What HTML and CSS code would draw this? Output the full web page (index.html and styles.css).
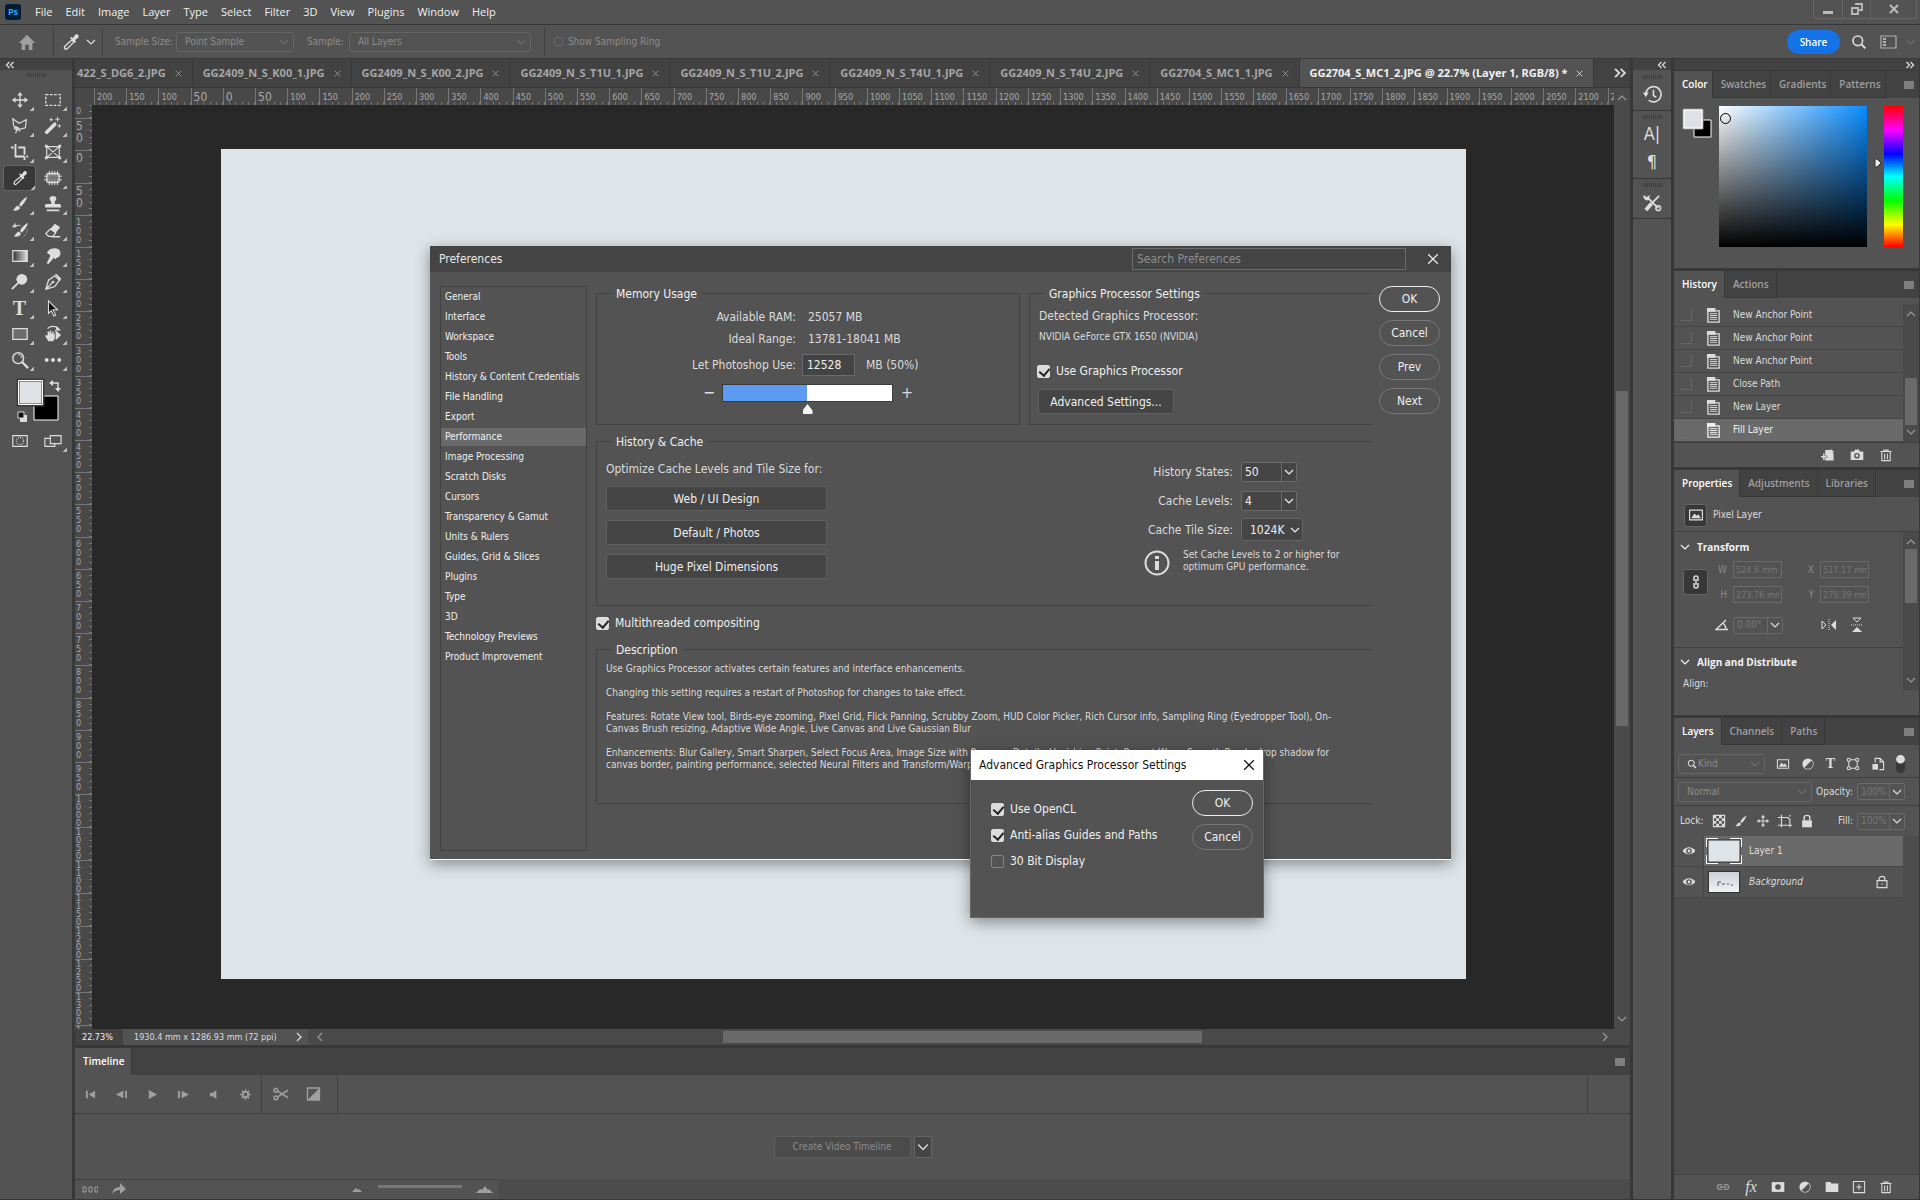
FILE: index.html
```html
<!DOCTYPE html>
<html lang="en">
<head>
    <meta charset="UTF-8">
    <meta name="viewport" content="width=device-width, initial-scale=1.0">
    <title>Photoshop</title>
    <link rel="stylesheet" href="styles.css">
</head>
<body>
    <!-- shared icons -->
    <svg class="sprite" aria-hidden="true">
        <symbol id="chev" viewBox="0 0 10 10"><path d="M1 3l4 4 4-4" fill="none" stroke="currentColor" stroke-width="1.2"/></symbol>
        <symbol id="chev-up" viewBox="0 0 10 10"><path d="M1 7l4-4 4 4" fill="none" stroke="currentColor" stroke-width="1.2"/></symbol>
        <symbol id="chev-left" viewBox="0 0 10 10"><path d="M7 1L3 5l4 4" fill="none" stroke="currentColor" stroke-width="1.2"/></symbol>
        <symbol id="chev-right" viewBox="0 0 10 10"><path d="M3 1l4 4-4 4" fill="none" stroke="currentColor" stroke-width="1.2"/></symbol>
        <symbol id="dbl-left" viewBox="0 0 10 10"><path d="M4.500 2L1.500 5l3 3M8.500 2L5.500 5l3 3" fill="none" stroke="currentColor" stroke-width="1.3"/></symbol>
        <symbol id="dbl-right" viewBox="0 0 10 10"><path d="M1.500 2l3 3-3 3M5.500 2l3 3-3 3" fill="none" stroke="currentColor" stroke-width="1.3"/></symbol>
        <symbol id="close" viewBox="0 0 10 10"><path d="M1 1l8 8M9 1L1 9" fill="none" stroke="currentColor" stroke-width="1.1"/></symbol>
        <symbol id="menu" viewBox="0 0 10 10"><path d="M0 2h10M0 4h10M0 6h10M0 8h10" stroke="currentColor"/></symbol>
        <symbol id="eyedropper" viewBox="0 0 20 20"><path d="M4 17c-1-1-1-2 1-4l6-5 2 2-6 6c-1 1-2 2-3 1z" fill="none" stroke="currentColor" stroke-width="1.3"/><path d="M9 6l1-1 2 1 2-3c2-2 5 1 3 3l-3 2 1 2-1 1z" fill="currentColor"/></symbol>
        <symbol id="move" viewBox="0 0 20 20"><path d="M10 3v14M3 10h14" stroke="currentColor" stroke-width="1.4"/><path d="M10 1l3 4H7zM10 19l3-4H7zM1 10l4-3v6zM19 10l-4-3v6z" fill="currentColor"/></symbol>
        <symbol id="brush" viewBox="0 0 20 20"><path d="M18 2c-4 2-7 5-9 9l2 2c3-3 6-7 7-11z" fill="currentColor"/><path d="M8 12c-3 0-3 3-6 5 4 1 8 0 8-3z" fill="currentColor"/></symbol>
        <symbol id="trash" viewBox="0 0 20 20"><path d="M2 5h16M7 5V3h6v2M4 5v13h12V5M8 8v8M12 8v8" fill="none" stroke="currentColor" stroke-width="1.500"/></symbol>
        <symbol id="half" viewBox="0 0 20 20"><circle cx="10" cy="10" r="8" fill="currentColor"/><path d="M5 15L15 5a7 7 0 0 1-10 10z" fill="#535353"/></symbol>
        <symbol id="search" viewBox="0 0 20 20"><circle cx="8.500" cy="8.500" r="6" fill="none" stroke="currentColor" stroke-width="2"/><path d="M13 13l5 5" stroke="currentColor" stroke-width="2.500"/></symbol>
        <symbol id="image" viewBox="0 0 20 20"><path d="M2 4h16v12H2z" fill="none" stroke="currentColor" stroke-width="1.500"/><path d="M4 14l4-6 3 3 2-2 3 5z" fill="currentColor"/></symbol>
        <symbol id="state" viewBox="0 0 16 16"><path d="M1 0h9v4H1z" fill="currentColor"/><path d="M2 3h12v12H2z" fill="none" stroke="currentColor" stroke-width="1.400"/><path d="M4 6h8M4 8h8M4 10h8M4 12h8" stroke="currentColor"/></symbol>
        <symbol id="eye" viewBox="0 0 20 20"><path d="M1 10c4-7 14-7 18 0-4 6-14 6-18 0z" fill="currentColor"/><circle cx="10" cy="10" r="4" fill="#535353"/><circle cx="10" cy="10" r="2" fill="currentColor"/></symbol>
        <symbol id="gizmo" viewBox="0 0 20 20"><path d="M4 4h12v12H4z" fill="none" stroke="currentColor" stroke-width="1.500"/><path d="M2 2h4v4H2zM14 2h4v4h-4zM2 14h4v4H2zM14 14h4v4h-4z" fill="#535353" stroke="currentColor" stroke-width="1.400"/></symbol>
    </svg>

    <header class="menubar">
        <span class="logo">Ps</span>
        <nav class="menus">
            <a href="#">File</a><a href="#">Edit</a><a href="#">Image</a><a href="#">Layer</a><a href="#">Type</a><a href="#">Select</a><a href="#">Filter</a><a href="#">3D</a><a href="#">View</a><a href="#">Plugins</a><a href="#">Window</a><a href="#">Help</a>
        </nav>
        <div class="window-controls">
            <button aria-label="Minimize"><svg viewBox="0 0 12 12"><path d="M1 8h10v3H1z" fill="currentColor"/></svg></button>
            <button aria-label="Restore"><svg viewBox="0 0 12 12"><path d="M4 1h7v6H8M1 5h6v6H1z" fill="none" stroke="currentColor" stroke-width="1.800"/></svg></button>
            <button class="wide" aria-label="Close"><svg viewBox="0 0 12 12"><path d="M2 2l8 8M10 2l-8 8" stroke="currentColor" stroke-width="2"/></svg></button>
        </div>
    </header>

    <div class="options">
        <button class="home" aria-label="Home"><svg viewBox="0 0 20 20"><path d="M10 2L1 11h3v8h4v-6h4v6h4v-8h3z" fill="currentColor"/></svg></button>
        <button class="current-tool" aria-label="Eyedropper tool"><svg class="i20"><use href="#eyedropper"/></svg><svg class="i10"><use href="#chev"/></svg></button>
        <div class="option-fields">
            <label for="sampleSize">Sample Size:</label>
            <span class="select size"><select id="sampleSize" disabled><option>Point Sample</option></select><svg><use href="#chev"/></svg></span>
            <label for="sample">Sample:</label>
            <span class="select sample"><select id="sample" disabled><option>All Layers</option></select><svg><use href="#chev"/></svg></span>
            <label class="ring"><input type="checkbox" disabled>Show Sampling Ring</label>
        </div>
        <button class="share">Share</button>
        <button class="i16 bright" aria-label="Search"><svg class="i16"><use href="#search"/></svg></button>
        <button class="workspace" aria-label="Workspace"><svg viewBox="0 0 18 16"><path d="M1 2h15v12H1z" fill="none" stroke="currentColor" stroke-width="1.200"/><path d="M3 4h3v2H3zM3 7h3v2H3zM3 10h3v2H3z" fill="currentColor"/></svg><svg class="i10 faint"><use href="#chev"/></svg></button>
    </div>

    <main class="workarea">
        <aside class="toolbox">
            <div class="collapse"><svg class="i10"><use href="#dbl-left"/></svg></div>
            <div class="grip"></div>
            <div class="tools">
                <button aria-label="Move"><svg><use href="#move"/></svg></button>
                <button aria-label="Marquee"><svg viewBox="0 0 20 20"><path d="M2 4h16v12H2z" fill="none" stroke="currentColor" stroke-width="1.500" stroke-dasharray="3 1.600"/></svg></button>
                <button aria-label="Lasso"><svg viewBox="0 0 20 20"><path d="M2 2l7 5 8-4-1 9-8 2-5-4zM8 12c-5-3-6 2-1 2l-2 4M8 12l2 4" fill="none" stroke="currentColor" stroke-width="1.300"/></svg></button>
                <button aria-label="Magic wand"><svg viewBox="0 0 20 20"><path d="M3 17L12 8" stroke="currentColor" stroke-width="4" stroke-linecap="round"/><path d="M8 1v4M6 3h4M15 0v5M12.500 2.500h5M17 8v4M15 10h4" stroke="currentColor"/></svg></button>
                <button aria-label="Crop"><svg viewBox="0 0 20 20"><path d="M5 1v14h10M0 5h3M8 5h7v8M15 15v4M17 15h2" fill="none" stroke="currentColor" stroke-width="2"/></svg></button>
                <button aria-label="Frame"><svg viewBox="0 0 20 20"><path d="M3 4h14v12H3zM3 4l14 12M17 4L3 16" fill="none" stroke="currentColor" stroke-width="1.300"/><path d="M1 2h3v3H1zM16 2h3v3h-3zM1 15h3v3H1zM16 15h3v3h-3z" fill="currentColor"/></svg></button>
                <button class="active" aria-label="Eyedropper"><svg><use href="#eyedropper"/></svg></button>
                <button aria-label="Patch"><svg viewBox="0 0 20 20"><rect x="3" y="5" width="14" height="10" rx="2" fill="#777" stroke="currentColor" stroke-width="1.400"/><path d="M6 2v5M9 2v5M12 2v5M15 2v5M6 13v5M9 13v5M12 13v5M15 13v5M0 8h5M0 12h5M15 8h5M15 12h5" stroke="currentColor"/></svg></button>
                <button aria-label="Brush"><svg><use href="#brush"/></svg></button>
                <button aria-label="Clone stamp"><svg viewBox="0 0 20 20"><path d="M10 1c4 0 5 4 2 6v3h5c2 0 2 2 2 4H1c0-2 0-4 2-4h5V7C5 5 6 1 10 1zM3 16h14v2H3z" fill="currentColor"/></svg></button>
                <button aria-label="History brush"><svg viewBox="0 0 20 20"><path d="M19 2c-4 2-7 5-9 9l2 2c3-3 6-7 7-11zM9 12c-3 0-3 3-6 5 4 1 8 0 8-3zM1 7l4-5v3c3-1 5-1 7 0-3 0-5 0-7 2z" fill="currentColor"/><path d="M18 9c0 4-2 7-5 9" fill="none" stroke="currentColor" stroke-dasharray="1 1.500"/></svg></button>
                <button aria-label="Eraser"><svg viewBox="0 0 20 20"><path d="M12 3l6 4-5 6-6-4z" fill="currentColor"/><path d="M7 9l6 4-3 4H5l-3-3zM8 17.500h10" fill="none" stroke="currentColor" stroke-width="1.400"/></svg></button>
                <button aria-label="Gradient"><svg viewBox="0 0 20 20"><defs><linearGradient id="gr"><stop offset="0" stop-color="#333"/><stop offset="1" stop-color="#ddd"/></linearGradient></defs><path d="M2 4h16v12H2z" fill="url(#gr)" stroke="currentColor" stroke-width="1.400"/></svg></button>
                <button aria-label="Smudge"><svg viewBox="0 0 20 20"><path d="M4 5c3-5 13-5 14 0 1 4-1 7-4 7l-1 2-2-2-6 7-2-1 4-8-1-2c-2 0-3-1-2-3z" fill="currentColor"/></svg></button>
                <button aria-label="Dodge"><svg viewBox="0 0 20 20"><circle cx="12" cy="7" r="6" fill="currentColor"/><path d="M8 11l-7 7" stroke="currentColor" stroke-width="2"/></svg></button>
                <button aria-label="Pen"><svg viewBox="0 0 20 20"><path d="M2 18l3-10 7-5 5 5-5 7zM2 18l7-7" fill="none" stroke="currentColor" stroke-width="1.400"/><circle cx="10" cy="10" r="1.500" fill="currentColor"/><path d="M12 1l2 0 5 5-1 3z" fill="currentColor"/></svg></button>
                <button class="glyph" aria-label="Type">T</button>
                <button aria-label="Path selection"><svg viewBox="0 0 20 20"><path d="M5 2l10 10H10l3 6-2 1-3-6-3 3z" fill="#111" stroke="currentColor" stroke-width="1.200"/></svg></button>
                <button aria-label="Rectangle"><svg viewBox="0 0 20 20"><path d="M2 4h16v12H2z" fill="#6d6d6d" stroke="currentColor" stroke-width="1.400"/></svg></button>
                <button aria-label="Rotate view"><svg viewBox="0 0 20 20"><path d="M5 18L1 12l2-1 1 1V7h2v3l1-4h1v4l2-3 1 1-1 3 2-2v6l-2 3z" fill="currentColor"/><path d="M12 5l7 6-6 6v-8z" fill="currentColor"/><path d="M4 4c3-3 7-3 11-1" fill="none" stroke="currentColor" stroke-width="1.400"/><path d="M14 1l5 5h-6z" fill="currentColor"/></svg></button>
                <button aria-label="Zoom"><svg viewBox="0 0 20 20"><circle cx="8" cy="8" r="6" fill="none" stroke="currentColor" stroke-width="1.600"/><path d="M12 12l7 7" stroke="currentColor" stroke-width="2.500"/><path d="M8 4c2 0 4 2 4 4" fill="none" stroke="currentColor"/></svg></button>
                <button aria-label="More tools"><svg viewBox="0 0 20 20"><circle cx="3" cy="10" r="2.200" fill="currentColor"/><circle cx="10" cy="10" r="2.200" fill="currentColor"/><circle cx="17" cy="10" r="2.200" fill="currentColor"/></svg></button>
            </div>
            <svg class="swatches" viewBox="0 0 66 46"><path d="M30 18h24v24H30z" fill="#000" stroke="#fff"/><path d="M14 2h25v25H14z" fill="#dfe3e6" stroke="#3a3a3a" stroke-width="3"/><path d="M14.500 2.500h24v24h-24z" fill="none" stroke="#fff"/><path d="M16 37h7v7h-7z" fill="#ddd"/><path d="M14 34h6v6h-6z" fill="#111" stroke="#ddd"/><path d="M48 5h6v7" fill="none" stroke="#ddd" stroke-width="1.500"/><path d="M45 5l4-3v6zM54 14l-3-4h6z" fill="#ddd"/></svg>
            <div class="tools">
                <button class="plain" aria-label="Quick mask"><svg viewBox="0 0 20 20"><path d="M2 4h16v12H2z" fill="none" stroke="currentColor" stroke-width="1.300"/><circle cx="10" cy="10" r="4" fill="none" stroke="currentColor" stroke-width="1.300" stroke-dasharray="1 1.300"/></svg></button>
                <button aria-label="Screen mode"><svg viewBox="0 0 20 20"><path d="M1 7h11v9H1z" fill="none" stroke="currentColor" stroke-width="1.300"/><path d="M7 4h12v9H7z" fill="#535353" stroke="currentColor" stroke-width="1.300"/></svg></button>
            </div>
        </aside>

        <section class="center">
            <div class="doc-tabs">
                <div class="doc-tab first">422_S_DG6_2.JPG<svg><use href="#close"/></svg></div>
                <div class="doc-tab">GG2409_N_S_K00_1.JPG<svg><use href="#close"/></svg></div>
                <div class="doc-tab">GG2409_N_S_K00_2.JPG<svg><use href="#close"/></svg></div>
                <div class="doc-tab">GG2409_N_S_T1U_1.JPG<svg><use href="#close"/></svg></div>
                <div class="doc-tab">GG2409_N_S_T1U_2.JPG<svg><use href="#close"/></svg></div>
                <div class="doc-tab">GG2409_N_S_T4U_1.JPG<svg><use href="#close"/></svg></div>
                <div class="doc-tab">GG2409_N_S_T4U_2.JPG<svg><use href="#close"/></svg></div>
                <div class="doc-tab">GG2704_S_MC1_1.JPG<svg><use href="#close"/></svg></div>
                <div class="doc-tab active">GG2704_S_MC1_2.JPG @ 22.7% (Layer 1, RGB/8) *<svg><use href="#close"/></svg></div>
                <span class="more"><svg class="i14"><use href="#dbl-right"/></svg></span>
            </div>
            <div class="editor">
                <div class="corner"></div>
                <div class="ruler-x" id="rulerX"></div>
                <div class="ruler-y" id="rulerY"></div>
                <div class="canvas"><div class="paper"></div></div>
                <div class="vscroll"><svg class="i10"><use href="#chev-up"/></svg><div class="thumb"></div><svg class="i10"><use href="#chev"/></svg></div>
            </div>
            <div class="status">
                <input class="zoom" aria-label="Zoom level" value="22.73%">
                <span class="doc-size">1930.4 mm x 1286.93 mm (72 ppi)</span>
                <svg class="i10 expand"><use href="#chev-right"/></svg>
                <div class="hscroll"><svg class="i10"><use href="#chev-left"/></svg><div class="thumb"></div><svg class="i10"><use href="#chev-right"/></svg></div>
            </div>
            <section class="timeline">
                <div class="panel-tabs"><button class="active">Timeline</button><svg class="i10 burger"><use href="#menu"/></svg></div>
                <div class="transport">
                    <button aria-label="First frame"><svg viewBox="0 0 12 12"><path d="M1 2h2v8H1zM11 2v8L4 6z" fill="currentColor"/></svg></button>
                    <button aria-label="Previous frame"><svg viewBox="0 0 12 12"><path d="M10 2h2v8h-2zM8 2v8L0 6z" fill="currentColor"/></svg></button>
                    <button aria-label="Play"><svg viewBox="0 0 12 12"><path d="M2 1l9 5-9 5z" fill="currentColor"/></svg></button>
                    <button aria-label="Next frame"><svg viewBox="0 0 12 12"><path d="M0 2h2v8H0zM4 2v8l8-4z" fill="currentColor"/></svg></button>
                    <button aria-label="Mute"><svg viewBox="0 0 12 12"><path d="M1 4h3l4-3v10L4 8H1z" fill="currentColor"/></svg></button>
                    <button aria-label="Settings"><svg viewBox="0 0 12 12"><circle cx="6" cy="6" r="3" fill="none" stroke="currentColor" stroke-width="2"/><path d="M6 0v2M6 10v2M0 6h2M10 6h2M2 2l1.400 1.400M8.600 8.600L10 10M10 2L8.600 3.400M3.400 8.600L2 10" stroke="currentColor" stroke-width="1.600"/></svg></button>
                    <div class="edit-tools">
                        <button aria-label="Split"><svg viewBox="0 0 16 14"><circle cx="3" cy="3" r="2" fill="none" stroke="currentColor" stroke-width="1.600"/><circle cx="3" cy="11" r="2" fill="none" stroke="currentColor" stroke-width="1.600"/><path d="M5 4l11 7M5 10l11-7" stroke="currentColor" stroke-width="1.600"/></svg></button>
                        <button aria-label="Transition"><svg viewBox="0 0 14 14"><path d="M1 1h12v12H1z" fill="none" stroke="currentColor" stroke-width="1.300"/><path d="M13 1v12H1z" fill="currentColor"/></svg></button>
                    </div>
                    <div class="ruler-end"></div>
                </div>
                <div class="track">
                    <button class="create" disabled>Create Video Timeline</button>
                    <button class="create-more" aria-label="Timeline type"><svg class="i12"><use href="#chev"/></svg></button>
                </div>
                <div class="timeline-foot">
                    <div class="foot-left">
                        <svg class="i16" viewBox="0 0 16 16"><path d="M1 6h3v5H1zM7 6h3v5H7zM13 6h3v5h-3z" fill="none" stroke="currentColor"/></svg>
                        <svg class="i16" viewBox="0 0 16 16"><path d="M1 13c1-5 4-7 8-7V2l6 6-6 5V9c-3 0-6 1-8 4z" fill="currentColor"/></svg>
                        <svg class="i16 push" viewBox="0 0 16 16"><path d="M3 11l4-4 2 2 1-1 3 3z" fill="currentColor"/></svg>
                        <input type="range" aria-label="Timeline zoom">
                        <svg class="i18" viewBox="0 0 18 16"><path d="M1 12l4-4 2 1 3-4 3 4 1-1 4 4z" fill="currentColor"/></svg>
                    </div>
                </div>
            </section>
        </section>

        <aside class="dock">
            <div class="collapse end"><svg class="i10"><use href="#dbl-left"/></svg></div>
            <div class="dock-group">
                <div class="grip"></div>
                <button aria-label="History"><svg viewBox="0 0 20 20"><path d="M3 10a8 8 0 1 1 3 6M11 5v6l3 2" fill="none" stroke="currentColor" stroke-width="1.700"/><path d="M0 8h6l-3 5z" fill="currentColor"/></svg></button>
            </div>
            <div class="dock-group">
                <div class="grip"></div>
                <button class="letter" aria-label="Character">A|</button>
                <button class="letter" aria-label="Paragraph">¶</button>
            </div>
            <div class="dock-group">
                <div class="grip"></div>
                <button aria-label="Tool presets"><svg viewBox="0 0 20 20"><path d="M4 4l12 12M17 3L9 11" stroke="currentColor" stroke-width="1.800"/><path d="M9 11l-6 7" stroke="currentColor" stroke-width="4"/><path d="M1 3l3 3 3-3M1 3c0 4 3 5 6 3" fill="none" stroke="currentColor" stroke-width="1.600"/><circle cx="16" cy="16" r="2.500" fill="none" stroke="currentColor" stroke-width="1.500"/></svg></button>
            </div>
        </aside>

        <aside class="panels">
            <div class="collapse end"><svg class="i10"><use href="#dbl-right"/></svg></div>
            <section class="panel color-panel">
                <div class="panel-tabs"><button class="active">Color</button><button>Swatches</button><button>Gradients</button><button>Patterns</button><svg class="i10 burger"><use href="#menu"/></svg></div>
                <div class="color-body">
                    <svg class="mini-swatches" viewBox="0 0 32 32"><path d="M12 12h17v17H12z" fill="#000" stroke="#fff"/><path d="M1 1h20v20H1z" fill="#dfe1e4" stroke="#888"/><path d="M2 2h18v18H2z" fill="#dfe1e4" stroke="#fff"/></svg>
                    <div class="field"><span class="picker"></span></div>
                    <svg class="hue-mark" viewBox="0 0 8 10"><path d="M1 1h2l4 4-4 4H1z" fill="#eee" stroke="#333" stroke-width="1"/></svg>
                    <div class="hue"></div>
                </div>
            </section>
            <section class="panel history-panel">
                <div class="panel-tabs"><button class="active">History</button><button>Actions</button><svg class="i10 burger"><use href="#menu"/></svg></div>
                <div class="history-body">
                    <ul class="states">
                        <li><i class="slot"></i><svg><use href="#state"/></svg>New Anchor Point</li>
                        <li><i class="slot"></i><svg><use href="#state"/></svg>New Anchor Point</li>
                        <li><i class="slot"></i><svg><use href="#state"/></svg>New Anchor Point</li>
                        <li><i class="slot"></i><svg><use href="#state"/></svg>Close Path</li>
                        <li><i class="slot"></i><svg><use href="#state"/></svg>New Layer</li>
                        <li class="active"><i class="slot"></i><svg><use href="#state"/></svg>Fill Layer</li>
                    </ul>
                    <div class="side-scroll history-scroll"><svg class="i10"><use href="#chev-up"/></svg><div class="thumb"></div><svg class="i10"><use href="#chev"/></svg></div>
                </div>
                <div class="panel-foot">
                    <button aria-label="New document from state"><svg viewBox="0 0 20 20"><path d="M6 3h7l5 5v10H6v-4h3v-3H6zM14 1l5 5h-5z" fill="currentColor"/><path d="M4 8v9M0 12.500h8" stroke="currentColor" stroke-width="2"/></svg></button>
                    <button aria-label="Snapshot"><svg viewBox="0 0 20 20"><path d="M1 5h5l1-3h6l1 3h5v12H1z" fill="currentColor"/><circle cx="10" cy="11" r="3" fill="none" stroke="#535353" stroke-width="2"/></svg></button>
                    <button aria-label="Delete state"><svg><use href="#trash"/></svg></button>
                </div>
            </section>
            <section class="panel properties-panel">
                <div class="panel-tabs"><button class="active">Properties</button><button>Adjustments</button><button>Libraries</button><svg class="i10 burger"><use href="#menu"/></svg></div>
                <div class="layer-kind"><span class="dark-box"><svg class="i16"><use href="#image"/></svg></span>Pixel Layer</div>
                <div class="props-body">
                    <div class="props">
                        <h4><svg class="i10"><use href="#chev"/></svg>Transform</h4>
                        <div class="transform">
                            <span class="dark-box link"><svg viewBox="0 0 10 16"><path d="M3 7V4a2 2 0 0 1 4 0v3M3 9v3a2 2 0 0 0 4 0V9M5 5v6" fill="none" stroke="currentColor" stroke-width="1.500"/></svg></span>
                            <label for="tw">W</label><input id="tw" value="524.6 mm" disabled>
                            <label for="tx">X</label><input id="tx" value="517.17 mm" disabled>
                            <label for="th">H</label><input id="th" value="273.76 mm" disabled>
                            <label for="ty">Y</label><input id="ty" value="279.39 mm" disabled>
                        </div>
                        <div class="angle-row">
                            <svg class="angle" viewBox="0 0 14 12"><path d="M13 10.500H1L11 1M8 4c2 2 3 4 3 6" fill="none" stroke="currentColor" stroke-width="1.300"/></svg>
                            <span class="combo"><input aria-label="Angle" value="0.00°" disabled><button aria-label="Angle presets"><svg class="i10"><use href="#chev"/></svg></button></span>
                            <svg class="flip" viewBox="0 0 16 14"><path d="M1 3l4 4-4 4z" fill="none" stroke="currentColor"/><path d="M15 2v10l-5-5z" fill="currentColor"/><path d="M8 1v12" stroke="currentColor" stroke-dasharray="1 1"/></svg>
                            <svg class="flip" viewBox="0 0 14 16"><path d="M3 1h8L7 5z" fill="none" stroke="currentColor"/><path d="M2 15h10L7 10z" fill="currentColor"/><path d="M1 8h12" stroke="currentColor" stroke-dasharray="1 1"/></svg>
                        </div>
                        <h4 class="align"><svg class="i10"><use href="#chev"/></svg>Align and Distribute</h4>
                        <p class="align-label">Align:</p>
                    </div>
                    <div class="side-scroll props-scroll"><svg class="i10"><use href="#chev-up"/></svg><div class="thumb"></div><svg class="i10"><use href="#chev"/></svg></div>
                </div>
            </section>
            <section class="panel layers-panel">
                <div class="panel-tabs"><button class="active">Layers</button><button>Channels</button><button>Paths</button><svg class="i10 burger"><use href="#menu"/></svg></div>
                <div class="filter-row">
                    <span class="select kind"><svg class="lens"><use href="#search"/></svg><select aria-label="Filter" disabled><option>Kind</option></select><svg><use href="#chev"/></svg></span>
                    <svg class="i14"><use href="#image"/></svg>
                    <svg class="i14"><use href="#half"/></svg>
                    <span class="t-glyph">T</span>
                    <svg class="i14"><use href="#gizmo"/></svg>
                    <svg class="i14" viewBox="0 0 20 20"><path d="M6 8V2h7l5 5v11h-6M13 2v5h5" fill="none" stroke="currentColor" stroke-width="1.600"/><path d="M2 10h8v8H2z" fill="currentColor"/></svg>
                    <span class="toggle"></span>
                </div>
                <div class="blend-row">
                    <span class="select blend"><select aria-label="Blend mode" disabled><option>Normal</option></select><svg><use href="#chev"/></svg></span>
                    <label for="opacity">Opacity:</label>
                    <span class="combo"><input id="opacity" value="100%" disabled><button aria-label="Opacity slider"><svg class="i10"><use href="#chev"/></svg></button></span>
                </div>
                <div class="lock-row">
                    <span>Lock:</span>
                    <svg class="i14" viewBox="0 0 20 20"><path d="M2 2h16v16H2z" fill="none" stroke="currentColor" stroke-width="1.600"/><path d="M2 2h4v4H2zM10 2h4v4h-4zM6 6h4v4H6zM14 6h4v4h-4zM2 10h4v4H2zM10 10h4v4h-4zM6 14h4v4H6zM14 14h4v4h-4z" fill="currentColor"/></svg>
                    <svg class="i14"><use href="#brush"/></svg>
                    <svg class="i14"><use href="#move"/></svg>
                    <svg class="i14" viewBox="0 0 20 20"><path d="M5 1v18M0 5h14l3 3v11M0 16h20M17 1v3" fill="none" stroke="currentColor" stroke-width="1.600"/></svg>
                    <svg class="i14" viewBox="0 0 20 20"><path d="M3 9h14v10H3z" fill="currentColor"/><path d="M6 9V5c0-4 8-4 8 0v4" fill="none" stroke="currentColor" stroke-width="2"/></svg>
                    <label for="fill">Fill:</label>
                    <span class="combo"><input id="fill" value="100%" disabled><button aria-label="Fill slider"><svg class="i10"><use href="#chev"/></svg></button></span>
                </div>
                <ul class="layers">
                    <li class="active"><span class="vis"><svg class="i14"><use href="#eye"/></svg></span><svg class="selected-thumb" viewBox="0 0 36 26"><path d="M2 2h32v22H2z" fill="#dfe4e8" stroke="#333"/><path d="M.5 9V.5H12M24 .5h11.500V9M.5 17v8.500H12M24 25.500h11.500V17" fill="none" stroke="#fff"/></svg><span class="name">Layer 1</span></li>
                    <li><span class="vis"><svg class="i14"><use href="#eye"/></svg></span><span class="thumbnail"><svg viewBox="0 0 30 20"><path d="M9 14v-4h3M13 12h3M18 12h2M22 13h2" fill="none" stroke="#555"/></svg></span><span class="name bg">Background</span><svg class="i14 lock" viewBox="0 0 20 20"><path d="M3 8h14v10H3zM6 8V5c0-4 8-4 8 0v3M10 12v2" fill="none" stroke="currentColor" stroke-width="1.700"/></svg></li>
                </ul>
                <div class="panel-foot layers-foot">
                    <svg class="i16 dim" viewBox="0 0 20 20"><path d="M9 7H6a3 3 0 0 0 0 6h3M11 7h3a3 3 0 0 1 0 6h-3M6 10h8" fill="none" stroke="currentColor" stroke-width="1.600"/></svg>
                    <button class="fx">fx</button>
                    <button aria-label="Add mask"><svg viewBox="0 0 20 20"><path d="M1 3h18v14H1z" fill="currentColor"/><circle cx="10" cy="10" r="4" fill="#535353"/></svg></button>
                    <button aria-label="Adjustment layer"><svg><use href="#half"/></svg></button>
                    <button aria-label="New group"><svg viewBox="0 0 20 20"><path d="M1 3h7l1 2h10v12H1z" fill="currentColor"/></svg></button>
                    <button aria-label="New layer"><svg viewBox="0 0 20 20"><path d="M2 2h16v16H2zM10 6v8M6 10h8" fill="none" stroke="currentColor" stroke-width="1.500"/></svg></button>
                    <button aria-label="Delete layer"><svg><use href="#trash"/></svg></button>
                </div>
            </section>
        </aside>
    </main>

    <form class="dialog preferences" id="preferences">
        <div class="title">
            <span>Preferences</span>
            <input type="search" placeholder="Search Preferences" aria-label="Search Preferences">
            <button type="button" aria-label="Close"><svg class="i12"><use href="#close"/></svg></button>
        </div>
        <div class="prefs-body">
            <ul class="sections">
                <li>General</li><li>Interface</li><li>Workspace</li><li>Tools</li><li>History &amp; Content Credentials</li><li>File Handling</li><li>Export</li><li class="active">Performance</li><li>Image Processing</li><li>Scratch Disks</li><li>Cursors</li><li>Transparency &amp; Gamut</li><li>Units &amp; Rulers</li><li>Guides, Grid &amp; Slices</li><li>Plugins</li><li>Type</li><li>3D</li><li>Technology Previews</li><li>Product Improvement</li>
            </ul>
            <div class="prefs-main">
                <div class="top-row">
                    <fieldset class="memory">
                        <legend>Memory Usage</legend>
                        <div class="mem-grid">
                            <span>Available RAM:</span><span>25057 MB</span>
                            <span>Ideal Range:</span><span>13781-18041 MB</span>
                            <label for="ram">Let Photoshop Use:</label><span class="ram"><input id="ram" value="12528">MB (50%)</span>
                        </div>
                        <div class="mem-slider">
                            <button type="button">−</button>
                            <input type="range" aria-label="Memory" min="0" max="100" value="50">
                            <button type="button">+</button>
                        </div>
                    </fieldset>
                    <fieldset class="gpu">
                        <legend>Graphics Processor Settings</legend>
                        <p>Detected Graphics Processor:</p>
                        <p class="small">NVIDIA GeForce GTX 1650 (NVIDIA)</p>
                        <label class="check"><input type="checkbox" checked>Use Graphics Processor</label>
                        <button type="button" class="btn">Advanced Settings...</button>
                    </fieldset>
                </div>
                <fieldset class="cache">
                    <legend>History &amp; Cache</legend>
                    <div class="cache-cols">
                        <div class="optimize">
                            <p>Optimize Cache Levels and Tile Size for:</p>
                            <button type="button" class="btn">Web / UI Design</button>
                            <button type="button" class="btn">Default / Photos</button>
                            <button type="button" class="btn">Huge Pixel Dimensions</button>
                        </div>
                        <div class="levels">
                            <label for="states">History States:</label><span class="combo"><input id="states" value="50"><button type="button" aria-label="History states slider"><svg class="i10"><use href="#chev"/></svg></button></span>
                            <label for="levels">Cache Levels:</label><span class="combo"><input id="levels" value="4"><button type="button" aria-label="Cache levels slider"><svg class="i10"><use href="#chev"/></svg></button></span>
                            <label for="tile">Cache Tile Size:</label><span class="select tile"><select id="tile"><option>1024K</option></select><svg><use href="#chev"/></svg></span>
                            <div class="note"><svg viewBox="0 0 26 26"><circle cx="13" cy="13" r="11.500" fill="none" stroke="currentColor" stroke-width="2"/><path d="M11 11h4v9h-4zM11 6h4v3h-4z" fill="currentColor"/></svg><p>Set Cache Levels to 2 or higher for<br>optimum GPU performance.</p></div>
                        </div>
                    </div>
                </fieldset>
                <label class="check multi"><input type="checkbox" checked>Multithreaded compositing</label>
                <fieldset class="description">
                    <legend>Description</legend>
                    <p>Use Graphics Processor activates certain features and interface enhancements.</p>
                    <p>Changing this setting requires a restart of Photoshop for changes to take effect.</p>
                    <p>Features: Rotate View tool, Birds-eye zooming, Pixel Grid, Flick Panning, Scrubby Zoom, HUD Color Picker, Rich Cursor info, Sampling Ring (Eyedropper Tool), On-<br>Canvas Brush resizing, Adaptive Wide Angle, Live Canvas and Live Gaussian Blur</p>
                    <p>Enhancements: Blur Gallery, Smart Sharpen, Select Focus Area, Image Size with Preserve Details, Vanishing Point, Puppet Warp, Smooth Brush, drop shadow for<br>canvas border, painting performance, selected Neural Filters and Transform/Warp</p>
                </fieldset>
            </div>
            <div class="actions">
                <button type="button" class="pill primary">OK</button>
                <button type="button" class="pill">Cancel</button>
                <button type="button" class="pill">Prev</button>
                <button type="button" class="pill">Next</button>
            </div>
        </div>
    </form>

    <form class="dialog advanced" id="advanced">
        <div class="title">
            <span>Advanced Graphics Processor Settings</span>
            <button type="button" aria-label="Close"><svg class="i12"><use href="#close"/></svg></button>
        </div>
        <div class="adv-body">
            <div class="checks">
                <label class="check"><input type="checkbox" checked>Use OpenCL</label>
                <label class="check"><input type="checkbox" checked>Anti-alias Guides and Paths</label>
                <label class="check"><input type="checkbox">30 Bit Display</label>
            </div>
            <div class="actions">
                <button type="button" class="pill primary">OK</button>
                <button type="button" class="pill">Cancel</button>
            </div>
        </div>
    </form>

    <script>
        // one cell per 50 mm on both rulers
        const rulerX = document.getElementById('rulerX');
        for (let mm = -200; mm <= 2150; mm += 50) {
            const cell = document.createElement('span');
            cell.textContent = Math.abs(mm);
            if (Math.abs(mm) < 100) cell.className = 'big';
            rulerX.appendChild(cell);
        }

        const rulerY = document.getElementById('rulerY');
        for (let mm = -100; mm <= 1350; mm += 50) {
            const cell = document.createElement('span');
            const digits = String(Math.abs(mm));
            cell.textContent = digits.split('').join(' ');
            if (digits.length < 3) cell.className = 'big';
            if (digits.length > 3) cell.className = 'tight';
            rulerY.appendChild(cell);
        }
    </script>
</body>
</html>
```
FILE: styles.css
```css
* {
    box-sizing: border-box;
}

body {
    margin: 0;
    height: 100vh;
    display: flex;
    flex-direction: column;
    overflow: hidden;
    background: #383838;
    color: #dcdcdc;
    font: 10px/12px "DejaVu Sans Condensed", "DejaVu Sans", sans-serif;
}

button, input, select {
    font: inherit;
    color: inherit;
    margin: 0;
}

button {
    padding: 0;
    border: 0;
    background: none;
}

select {
    appearance: none;
    opacity: 1;
}

ul, p, h4 {
    margin: 0;
    padding: 0;
    list-style: none;
}

svg {
    display: block;
    flex: none;
}

.sprite {
    display: none;
}

.i10 { width: 10px; height: 10px; }
.i12 { width: 12px; height: 12px; }
.i14 { width: 14px; height: 14px; }
.i16 { width: 16px; height: 16px; }
.i18 { width: 18px; height: 16px; }
.i20 { width: 20px; height: 20px; }

/* menu bar */
.menubar {
    display: flex;
    align-items: center;
    height: 24px;
    flex: none;
    background: #535353;
}

.logo {
    width: 16px;
    height: 16px;
    margin: 0 14px 0 5px;
    border-radius: 3px;
    background: #001d34;
    color: #31a8ff;
    font: bold 9px/15px "Open Sans", sans-serif;
    text-align: center;
}

.menus {
    display: flex;
    gap: 13px;
    font: 11px/24px "Open Sans", sans-serif;
}

.menus a {
    color: #f0f0f0;
    text-decoration: none;
}

.window-controls {
    display: flex;
    align-self: flex-start;
    height: 19px;
    margin: 0 3px 0 auto;
    border: 1px solid #656565;
    border-top: 0;
    border-radius: 0 0 3px 3px;
    color: #bbb;
}

.window-controls button {
    width: 28px;
    display: grid;
    place-items: center;
}

.window-controls button + button {
    border-left: 1px solid #656565;
}

.window-controls .wide {
    width: 46px;
}

.window-controls svg {
    width: 12px;
    height: 12px;
}

/* options bar */
.options {
    display: flex;
    align-items: center;
    height: 33px;
    margin-top: 1px;
    flex: none;
    background: #535353;
    color: #8c8c8c;
}

.home {
    width: 54px;
    height: 28px;
    display: grid;
    place-items: center;
    border-right: 1px solid #404040;
    color: #a0a0a0;
}

.home svg {
    width: 18px;
    height: 18px;
}

.current-tool {
    display: flex;
    align-items: center;
    justify-content: center;
    gap: 5px;
    width: 49px;
    height: 28px;
    border-right: 1px solid #404040;
    color: #ddd;
}

.option-fields {
    display: flex;
    align-items: center;
    margin-left: 12px;
}

.select {
    position: relative;
    display: flex;
    align-items: center;
    height: 20px;
    border: 1px solid #656565;
    border-radius: 3px;
}

.select select {
    width: 100%;
    padding: 0 8px;
    border: 0;
    background: none;
}

.select svg {
    position: absolute;
    right: 4px;
    width: 10px;
    height: 10px;
}

.select select:disabled + svg {
    color: #6c6c6c;
}

.select.size {
    width: 118px;
    margin: 0 13px 0 3px;
}

.select.sample {
    width: 182px;
    margin: 0 13px 0 5px;
}

.ring {
    display: flex;
    align-items: center;
    gap: 5px;
    height: 28px;
    padding-left: 9px;
    border-left: 1px solid #404040;
}

.ring input {
    appearance: none;
    width: 9px;
    height: 9px;
    border: 1px solid #6a6a6a;
    border-radius: 2px;
}

.share {
    width: 53px;
    height: 24px;
    margin: 0 11px 0 auto;
    border-radius: 12px;
    background: #1473e6;
    color: #fff;
    font: 600 10px/24px "Open Sans", sans-serif;
}

.bright {
    color: #ddd;
}

.workspace {
    display: flex;
    align-items: center;
    gap: 8px;
    margin: 0 4px 0 13px;
    color: #b0b0b0;
}

.workspace svg:first-child {
    width: 18px;
    height: 16px;
}

.workspace .faint {
    color: #6c6c6c;
}

/* main columns */
.workarea {
    flex: 1;
    min-height: 0;
    display: grid;
    grid-template-columns: 72px minmax(0, 1fr) 38px 246px;
    column-gap: 3px;
    padding: 1px 0 1px 0;
}

.collapse {
    display: flex;
    align-items: center;
    height: 11px;
    margin-bottom: 1px;
    padding-left: 5px;
    background: #424242;
}

.collapse.end {
    justify-content: flex-end;
    padding-right: 4px;
}

.grip {
    width: 19px;
    height: 4px;
    background: repeating-linear-gradient(90deg, #3c3c3c 0 1px, transparent 1px 2px);
}

.toolbox {
    background: #535353;
}

.toolbox .grip {
    margin: 3px auto 10px 27px;
}

.tools {
    display: grid;
    grid-template-columns: 33px 33px;
    padding-left: 3px;
    color: #ddd;
}

.tools button {
    display: grid;
    place-items: center;
    height: 26px;
    /* the little flyout corner */
    background: linear-gradient(135deg, transparent 50%, #bbb 50%) 27px 20px / 4px 4px no-repeat;
}

.tools button.plain {
    background: none;
}

.tools button.active {
    border: 1px solid #666;
    border-radius: 3px;
    background-color: #383838;
}

.tools svg {
    width: 18px;
    height: 18px;
}

.tools .glyph {
    font: bold 20px/24px "Liberation Serif", serif;
}

.swatches {
    width: 66px;
    height: 46px;
    margin: 5px 0 4px 4px;
}

/* document tabs */
.center {
    display: flex;
    flex-direction: column;
    min-width: 0;
    min-height: 0;
}

.doc-tabs {
    display: flex;
    height: 28px;
    flex: none;
    margin-bottom: 1px;
    background: #424242;
    color: #a6a6a6;
    font: bold 11px/28px "Noto Sans", sans-serif;
    white-space: nowrap;
}

.doc-tab {
    display: flex;
    align-items: center;
    gap: 9px;
    padding: 0 10px;
    border-right: 1px solid #383838;
}

.doc-tab.first {
    padding-left: 2px;
}

.doc-tab.active {
    background: #535353;
    color: #f0f0f0;
}

.doc-tab svg {
    width: 7px;
    height: 7px;
}

.doc-tabs .more {
    margin: 7px 3px 0 auto;
    color: #ddd;
}

/* canvas and rulers */
.editor {
    flex: 1;
    min-height: 0;
    display: grid;
    grid-template-columns: 17px minmax(0, 1fr) 16px;
    grid-template-rows: 17px minmax(0, 1fr);
}

.corner {
    background: #484848;
}

.ruler-x {
    display: flex;
    overflow: hidden;
    padding-left: 2px;
    background: #484848;
    color: #a8a8a8;
}

.ruler-x span {
    flex: 0 0 calc(100% / 47.2);
    padding-left: 2px;
    border-left: 1px solid #777;
    background: repeating-linear-gradient(90deg, transparent 0 calc(20% - 1px), #777 calc(20% - 1px) 20%) 0 100% / 100% 3px no-repeat;
    font-size: 9px;
    line-height: 18px;
}

.ruler-x .big {
    font-size: 12px;
}

.ruler-y {
    grid-column: 1;
    grid-row: 2;
    display: flex;
    flex-direction: column;
    min-height: 0;
    overflow: hidden;
    background: #484848;
    color: #a8a8a8;
}

.ruler-y span {
    flex: 0 0 calc(100% / 28.7);
    width: 17px;
    padding: 2px 11px 0 1px;
    border-top: 1px solid #777;
    background: repeating-linear-gradient(180deg, transparent 0 calc(20% - 1px), #777 calc(20% - 1px) 20%) 100% 0 / 3px 100% no-repeat;
    font-size: 9px;
    line-height: 9px;
}

.ruler-y span:first-child {
    margin-top: -19px;
}

.ruler-y .big {
    padding-top: 1px;
    font-size: 12px;
    line-height: 12px;
}

.ruler-y .tight {
    padding-top: 0;
    line-height: 8px;
}

.canvas {
    grid-column: 2;
    grid-row: 2;
    display: flex;
    padding: 44px 148px 50px 129px;
    background: #282828;
}

.paper {
    flex: 1;
    background: #dfe4e8;
}

.vscroll {
    grid-column: 3;
    grid-row: 1 / 3;
    display: flex;
    flex-direction: column;
    align-items: center;
    padding: 5px 0;
    background: #4a4a4a;
    color: #999;
}

.vscroll .thumb {
    width: 12px;
    height: 36%;
    margin: auto;
    background: #6a6a6a;
}

.status {
    display: flex;
    align-items: center;
    height: 16px;
    flex: none;
    background: #535353;
}

.zoom {
    width: 48px;
    height: 16px;
    padding: 0 0 0 7px;
    border: 0;
    background: #424242;
    color: #f0f0f0;
    font-size: 9px;
}

.doc-size {
    margin-left: 11px;
    font-size: 9px;
}

.expand {
    width: 10px;
    margin: 0 4px 0 17px;
}

.hscroll {
    flex: 1;
    display: flex;
    align-items: center;
    align-self: stretch;
    padding: 0 20px 0 7px;
    background: #4a4a4a;
    color: #999;
}

.hscroll .thumb {
    width: 37%;
    height: 12px;
    margin: 0 auto;
    background: #6a6a6a;
}

/* panel tabs */
.panel-tabs {
    display: flex;
    height: 27px;
    flex: none;
    background: #424242;
    color: #a0a0a0;
    font: 600 10px/25px "Open Sans", sans-serif;
}

.panel-tabs button {
    padding: 0 7px 0 8px;
    border-right: 1px solid #383838;
    border-bottom: 1px solid #383838;
}

.color-panel .panel-tabs button {
    padding-right: 4px;
}

.panel-tabs button.active {
    border-bottom-color: #535353;
    background: #535353;
    color: #fff;
}

.burger {
    margin: 9px 5px 0 auto;
    color: #bbb;
}

/* timeline */
.timeline {
    display: flex;
    flex-direction: column;
    height: 151px;
    margin-top: 3px;
    flex: none;
    background: #535353;
}

.transport {
    display: flex;
    align-items: center;
    height: 39px;
    border-bottom: 1px solid #404040;
    color: #a0a0a0;
}

.transport button {
    width: 31px;
    display: grid;
    place-items: center;
}

.transport svg {
    width: 11px;
    height: 11px;
}

.edit-tools {
    display: flex;
    align-items: center;
    align-self: stretch;
    gap: 2px;
    padding: 0 8px 0 3px;
    border: solid #404040;
    border-width: 0 1px;
}

.edit-tools svg {
    width: 15px;
    height: 14px;
}

.ruler-end {
    width: 43px;
    align-self: stretch;
    margin-left: auto;
    border-left: 1px solid #404040;
}

.track {
    flex: 1;
    display: flex;
    align-items: center;
    justify-content: center;
    gap: 3px;
}

.create {
    width: 137px;
    height: 22px;
    border: 1px solid #5e5e5e;
    border-radius: 3px;
    background: #4b4b4b;
    color: #8c8c8c;
}

.create-more {
    width: 18px;
    height: 22px;
    display: grid;
    place-items: center;
    border: 1px solid #666;
    border-radius: 2px;
    background: #454545;
}

.timeline-foot {
    height: 20px;
    background: #4b4b4b;
}

.foot-left {
    display: flex;
    align-items: center;
    width: 423px;
    height: 20px;
    gap: 13px;
    padding: 0 5px 2px 7px;
    border-top: 1px solid #404040;
    background: #535353;
    color: #a0a0a0;
}

.push {
    margin-left: auto;
}

.foot-left input {
    appearance: none;
    width: 84px;
    height: 3px;
    margin-bottom: 5px;
    background: #777;
}

.foot-left input::-webkit-slider-thumb {
    appearance: none;
    width: 0;
}

/* collapsed dock */
.dock {
    background: #535353;
}

.dock-group {
    display: flex;
    flex-direction: column;
    align-items: center;
    padding: 4px 0 3px;
    border-bottom: 1px solid #383838;
}

.dock-group button {
    width: 28px;
    height: 26px;
    margin-top: 2px;
    display: grid;
    place-items: center;
    color: #ddd;
}

.dock-group svg {
    width: 19px;
    height: 19px;
}

.dock-group .letter {
    font-size: 18px;
    line-height: 24px;
}

/* right hand panels */
.panels {
    display: flex;
    flex-direction: column;
    min-height: 0;
    padding-right: 1px;
}

.panel {
    display: flex;
    flex-direction: column;
    flex: none;
    margin-bottom: 3px;
    background: #535353;
}

.color-panel {
    height: 197px;
}

.color-body {
    display: flex;
    align-items: flex-start;
    padding: 8px 16px 0 8px;
}

.mini-swatches {
    width: 32px;
    height: 32px;
    margin-top: 2px;
}

.field {
    position: relative;
    flex: 1;
    height: 141px;
    margin-left: 5px;
    background: linear-gradient(0deg, #000, transparent), linear-gradient(90deg, #fff, #0a8cff);
}

.picker {
    position: absolute;
    left: 1px;
    top: 7px;
    width: 11px;
    height: 11px;
    border: 1px solid #000;
    border-radius: 50%;
}

.hue-mark {
    width: 8px;
    height: 10px;
    margin: 52px 2px 0 7px;
}

.hue {
    width: 19px;
    height: 141px;
    background: linear-gradient(#f00, #f0f 17%, #00f 34%, #0ff 50%, #0f0 67%, #ff0 84%, #f00);
}

.history-panel {
    height: 196px;
}

.history-body {
    display: flex;
    flex: 1;
    padding-top: 6px;
}

.states {
    flex: 1;
}

.states li {
    display: flex;
    align-items: center;
    height: 23px;
    padding-left: 6px;
    border-bottom: 1px solid #464646;
}

.states li.active {
    background: #6a6a6a;
    color: #f0f0f0;
}

.states svg {
    width: 15px;
    height: 15px;
    margin: 1px 12px 0 14px;
}

.slot {
    width: 12px;
    height: 12px;
    border: 1px solid #666;
    border-width: 0 1px 1px 0;
}

.side-scroll {
    display: flex;
    flex-direction: column;
    align-items: center;
    width: 16px;
    padding: 5px 0;
    background: #4a4a4a;
    color: #999;
}

.side-scroll .thumb {
    width: 12px;
    background: #6a6a6a;
}

.history-scroll .thumb {
    height: 47px;
    margin: auto 0 2px;
}

.props-scroll .thumb {
    height: 54px;
    margin: 2px 0 auto;
}

.panel-foot {
    display: flex;
    align-items: center;
    justify-content: flex-end;
    gap: 15px;
    height: 25px;
    padding-right: 26px;
    border-top: 1px solid #404040;
}

.panel-foot button, .panel-foot button svg {
    width: 14px;
    height: 14px;
}

.properties-panel {
    height: 245px;
}

.layer-kind {
    display: flex;
    align-items: center;
    gap: 6px;
    height: 35px;
    padding: 2px 0 0 10px;
    border-bottom: 1px solid #404040;
}

.dark-box {
    display: grid;
    place-items: center;
    width: 23px;
    height: 23px;
    border: 1px solid #666;
    border-radius: 3px;
    background: #383838;
}

.props-body {
    display: flex;
    height: 158px;
}

.props {
    flex: 1;
}

.props h4 {
    display: flex;
    align-items: center;
    gap: 7px;
    height: 29px;
    padding-left: 6px;
    color: #f4f4f4;
    font: bold 10px/14px "Open Sans", sans-serif;
}

.transform {
    display: grid;
    grid-template-columns: 24px 14px 49px 26px 49px;
    grid-template-rows: 17px 17px;
    align-items: center;
    column-gap: 6px;
    row-gap: 8px;
    padding-left: 9px;
    color: #888;
    text-align: right;
}

.transform input {
    width: 49px;
    height: 17px;
    padding: 0 2px;
    border: 1px solid #6a6a6a;
    background: none;
    color: #767676;
    font-size: 9px;
}

.transform .link {
    grid-row: 1 / 3;
    width: 25px;
    height: 26px;
    color: #ddd;
}

.link svg {
    width: 10px;
    height: 16px;
}

.angle-row {
    display: flex;
    align-items: center;
    height: 44px;
    padding-left: 41px;
}

.angle {
    width: 14px;
    height: 12px;
    margin-right: 4px;
}

.flip {
    width: 16px;
    height: 16px;
    margin-right: 12px;
}

.angle-row .combo {
    width: 50px;
    margin-right: 38px;
}

.props .align {
    border-top: 1px solid #404040;
}

.align-label {
    padding: 2px 0 0 9px;
}

/* text box with an attached slider button */
.combo {
    display: flex;
    height: 17px;
    border: 1px solid #6a6a6a;
    border-radius: 2px;
}

.combo input {
    flex: 1;
    width: 0;
    padding: 0 3px;
    border: 0;
    background: none;
}

.combo input:disabled {
    color: #767676;
}

.combo button {
    width: 15px;
    display: grid;
    place-items: center;
    border-left: 1px solid #6a6a6a;
}

.layers-panel {
    flex: 1;
    min-height: 0;
    margin-bottom: 0;
}

.filter-row, .blend-row, .lock-row {
    display: flex;
    align-items: center;
    height: 28px;
    padding: 0 14px 0 4px;
    border-bottom: 1px solid #404040;
}

.filter-row {
    justify-content: space-between;
    height: 33px;
    padding-top: 5px;
    color: #ddd;
}

.kind {
    width: 87px;
    color: #8c8c8c;
}

.kind select {
    padding-left: 19px;
}

.select .lens {
    left: 8px;
    right: auto;
    color: #eee;
}

.t-glyph {
    font: bold 14px/14px "Liberation Serif", serif;
}

.toggle {
    width: 9px;
    height: 18px;
    border-radius: 5px;
    background: radial-gradient(circle at 50% 4px, #ddd 0 4px, #383838 5px);
}

.blend {
    width: 134px;
    margin-right: auto;
    color: #8c8c8c;
}

.blend-row .combo, .lock-row .combo {
    width: 48px;
    margin-left: 4px;
}

.lock-row {
    gap: 8px;
    height: 30px;
    padding-left: 6px;
    border-bottom: 0;
}

.lock-row label {
    margin-left: auto;
}

.lock-row .combo {
    margin-left: -4px;
}

.layers {
    flex: 1;
    padding-right: 16px;
    background: #4d4d4d;
}

.layers li {
    display: flex;
    align-items: center;
    height: 31px;
    border-bottom: 1px solid #464646;
    background: #535353;
}

.layers .active {
    background: #6a6a6a;
}

.vis {
    align-self: stretch;
    width: 30px;
    display: grid;
    place-items: center;
    border-right: 1px solid #464646;
    background: #535353;
}

.thumbnail {
    width: 32px;
    height: 22px;
    margin: 0 9px 0 4px;
    border: 1px solid #333;
    background: linear-gradient(#cdd1d8, #f0f1f4);
}

.selected-thumb {
    width: 36px;
    height: 26px;
    margin: 0 7px 0 2px;
}

.name {
    flex: 1;
}

.bg {
    font-style: italic;
}

.lock {
    margin-right: 14px;
}

.layers-foot {
    gap: 13px;
}

.dim {
    color: #999;
}

.fx {
    font: italic 16px/14px "Liberation Serif", serif;
}

/* dialogs */
.dialog {
    position: absolute;
    background: #535353;
    font-size: 12px;
    line-height: 14px;
    box-shadow: 0 4px 14px rgba(0, 0, 0, 0.4);
}

.dialog .title {
    display: flex;
    align-items: center;
    justify-content: space-between;
}

.preferences {
    left: 430px;
    top: 246px;
    width: 1021px;
    border-bottom: 1px solid #fff;
}

.preferences .title {
    height: 26px;
    padding: 0 12px 0 9px;
    background: #444;
    color: #e8e8e8;
}

.preferences .title input {
    width: 274px;
    height: 22px;
    margin: 0 21px 0 auto;
    padding: 0 4px;
    border: 1px solid #6a6a6a;
    background: #444;
}

.title input::placeholder {
    color: #8f8f8f;
}

.prefs-body {
    display: flex;
    padding: 14px 11px 8px 10px;
}

.sections {
    width: 147px;
    height: 565px;
    padding-top: 1px;
    border: 1px solid #424242;
    color: #f0f0f0;
    font-size: 10px;
    line-height: 18px;
}

.sections li {
    margin-bottom: 2px;
    padding-left: 4px;
    white-space: nowrap;
}

.sections .active {
    background: #6a6a6a;
}

.prefs-main {
    flex: 1;
    min-width: 0;
    margin: -1px 0 0 9px;
}

.top-row {
    display: grid;
    grid-template-columns: 424px 1fr;
    gap: 9px;
}

fieldset {
    min-width: 0;
    margin: 0;
    padding: 0 0 0 9px;
    border: 1px solid #424242;
}

legend {
    margin-left: 5px;
    padding: 2px 5px 0;
    color: #f0f0f0;
}

.memory, .gpu {
    height: 140px;
}

.gpu, .cache, .description {
    border-right: 0;
}

.mem-grid {
    display: grid;
    grid-template-columns: 190px 1fr;
    grid-template-rows: 22px 22px 30px;
    align-items: center;
    column-gap: 12px;
    padding-top: 5px;
}

.mem-grid > :nth-child(odd) {
    text-align: right;
}

.ram {
    display: flex;
    align-items: center;
    gap: 11px;
    margin-left: -6px;
}

.ram input {
    width: 53px;
    height: 22px;
    padding: 0 4px;
    border: 1px solid #6a6a6a;
    background: #444;
    color: #f0f0f0;
}

.mem-slider {
    display: flex;
    gap: 8px;
    margin: 4px 0 0 97px;
}

.mem-slider button {
    width: 11px;
    height: 18px;
    font-size: 16px;
}

.mem-slider input {
    appearance: none;
    width: 171px;
    height: 18px;
    border: 1px solid #3c3c3c;
    background: linear-gradient(90deg, #5d9bf3 50%, #fff 50%);
}

.mem-slider input::-webkit-slider-thumb {
    appearance: none;
    width: 10px;
    height: 10px;
    margin-top: 32px;
    background: #f4f4f4;
    clip-path: polygon(50% 0, 100% 65%, 100% 100%, 0 100%, 0 65%);
}

.gpu p {
    line-height: 20px;
    padding-top: 5px;
}

.gpu .small {
    padding: 0;
    font-size: 10px;
    line-height: 22px;
}

.check {
    display: flex;
    align-items: center;
    gap: 6px;
    color: #f0f0f0;
}

.check input {
    appearance: none;
    flex: none;
    width: 13px;
    height: 13px;
    border: 1px solid #858585;
    border-radius: 2px;
}

.check input:checked {
    border-color: #dcdcdc;
    background: #dcdcdc;
}

.check input:checked::after {
    content: "";
    display: block;
    width: 5px;
    height: 8px;
    margin: 0 0 0 3px;
    border: solid #222;
    border-width: 0 2px 2px 0;
    transform: rotate(40deg);
}

.gpu .check {
    margin: 16px 0 11px -2px;
}

.btn {
    height: 25px;
    border: 1px solid #606060;
    border-radius: 2px;
    background: #454545;
    color: #f0f0f0;
}

.gpu .btn {
    width: 136px;
    margin-left: -1px;
}

.cache {
    height: 173px;
    margin-top: 8px;
}

.cache-cols {
    display: flex;
    justify-content: space-between;
    padding-top: 8px;
}

.optimize {
    display: flex;
    flex-direction: column;
    gap: 9px;
    width: 221px;
    padding-top: 5px;
}

.optimize p {
    height: 15px;
    white-space: nowrap;
}

.levels {
    display: grid;
    grid-template-columns: 96px 62px;
    grid-template-rows: 29px 29px 29px auto;
    align-items: center;
    align-content: start;
    column-gap: 8px;
    width: 234px;
}

.levels label {
    text-align: right;
    white-space: nowrap;
}

.levels .combo {
    width: 56px;
    height: 20px;
    background: #454545;
    color: #f0f0f0;
}

.tile {
    height: 23px;
    background: #454545;
    color: #f0f0f0;
}

.tile svg {
    right: 2px;
}

.note {
    grid-column: 1 / 3;
    display: flex;
    gap: 13px;
    padding: 5px 0 0 7px;
    font-size: 10px;
    line-height: 12px;
    white-space: nowrap;
}

.note svg {
    width: 26px;
    height: 26px;
    margin-top: 1px;
}

.multi {
    margin: 10px 0 11px;
}

.description {
    height: 163px;
    padding-top: 6px;
    font-size: 10px;
    line-height: 12px;
}

.description legend {
    font-size: 12px;
    line-height: 14px;
}

.description p {
    margin-bottom: 12px;
    white-space: nowrap;
}

.actions {
    display: flex;
    flex-direction: column;
    gap: 8px;
    width: 61px;
    margin-left: 8px;
}

.pill {
    height: 26px;
    border: 1px solid #777;
    border-radius: 13px;
    color: #f0f0f0;
}

.primary {
    border-color: #eee;
}

.advanced {
    left: 970px;
    top: 750px;
    width: 294px;
    border: solid #666;
    border-width: 0 1px 1px;
}

.advanced .title {
    height: 30px;
    padding: 0 8px;
    background: #fff;
    color: #111;
}

.adv-body {
    display: flex;
    justify-content: space-between;
    height: 137px;
    padding: 10px 10px 0 20px;
}

.checks {
    display: flex;
    flex-direction: column;
    gap: 12px;
    padding-top: 12px;
}
```
